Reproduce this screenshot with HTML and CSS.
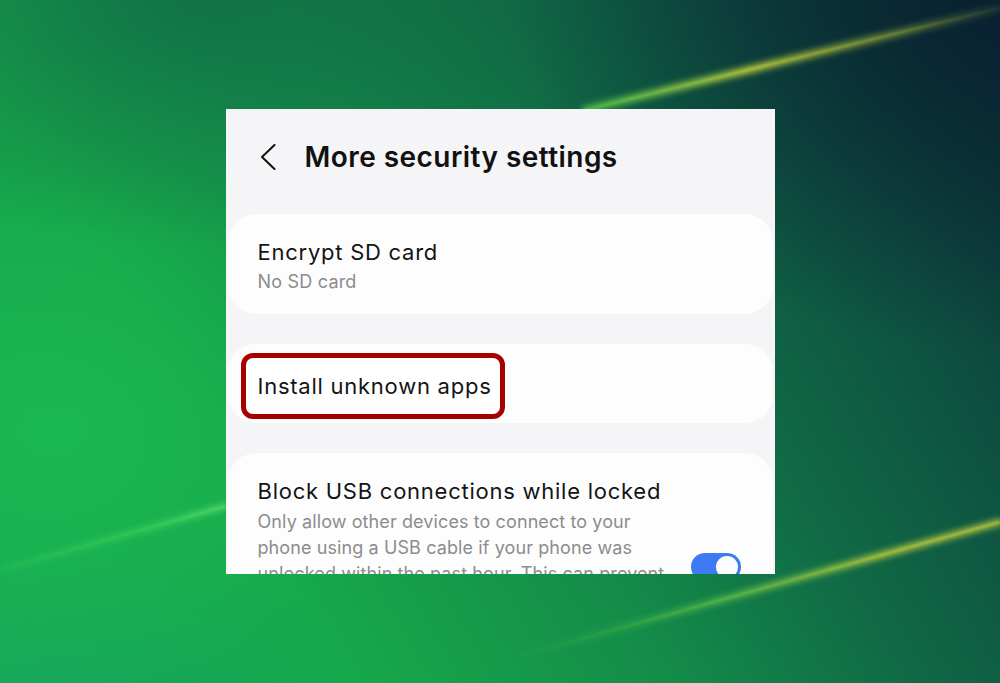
FILE: index.html
```html
<!DOCTYPE html>
<html lang="en">
<head>
<meta charset="utf-8">
<title>More security settings</title>
<link rel="stylesheet" href="styles.css">
</head>
<body>
<div class="stage">
  <svg class="streaks" width="1000" height="683" viewBox="0 0 1000 683" aria-hidden="true">
    <defs>
      <filter id="glow" x="-20%" y="-200%" width="140%" height="500%">
        <feGaussianBlur stdDeviation="3"/>
      </filter>
      <filter id="soft" x="-20%" y="-200%" width="140%" height="500%">
        <feGaussianBlur stdDeviation="0.8"/>
      </filter>
      <linearGradient id="s1" gradientUnits="userSpaceOnUse" x1="585" y1="110" x2="1000" y2="8">
        <stop offset="0" stop-color="#4fc24a" stop-opacity="0.9"/>
        <stop offset="0.4" stop-color="#b9c93c" stop-opacity="1"/>
        <stop offset="0.75" stop-color="#9db23a" stop-opacity="0.6"/>
        <stop offset="1" stop-color="#7d8f3a" stop-opacity="0.15"/>
      </linearGradient>
      <linearGradient id="s2" gradientUnits="userSpaceOnUse" x1="0" y1="570" x2="226" y2="506">
        <stop offset="0" stop-color="#3fd35c" stop-opacity="0.2"/>
        <stop offset="0.6" stop-color="#42d65c" stop-opacity="0.7"/>
        <stop offset="1" stop-color="#5fe070" stop-opacity="0.9"/>
      </linearGradient>
      <linearGradient id="s3" gradientUnits="userSpaceOnUse" x1="520" y1="656" x2="1000" y2="522">
        <stop offset="0" stop-color="#2fa848" stop-opacity="0.1"/>
        <stop offset="0.4" stop-color="#5cc04a" stop-opacity="0.8"/>
        <stop offset="0.75" stop-color="#b4c93c" stop-opacity="1"/>
        <stop offset="1" stop-color="#c0cf40" stop-opacity="0.9"/>
      </linearGradient>
    </defs>
    <g filter="url(#glow)">
      <line x1="585" y1="110" x2="1000" y2="8" stroke="url(#s1)" stroke-width="7" stroke-linecap="round"/>
      <line x1="0" y1="570" x2="226" y2="506" stroke="url(#s2)" stroke-width="5" stroke-linecap="round"/>
      <line x1="520" y1="656" x2="1000" y2="522" stroke="url(#s3)" stroke-width="6" stroke-linecap="round"/>
    </g>
    <g filter="url(#soft)">
      <line x1="585" y1="110" x2="1000" y2="8" stroke="url(#s1)" stroke-width="1.6"/>
      <line x1="0" y1="570" x2="226" y2="506" stroke="url(#s2)" stroke-width="1.2"/>
      <line x1="520" y1="656" x2="1000" y2="522" stroke="url(#s3)" stroke-width="1.6"/>
    </g>
  </svg>

  <main class="phone">
    <header class="appbar">
      <svg class="back" width="16" height="26" viewBox="0 0 16 26" aria-hidden="true">
        <path d="M14.5 1 L2 13 L14.5 25" fill="none" stroke="#111" stroke-width="2" stroke-linecap="round" stroke-linejoin="round"/>
      </svg>
      <h1 class="title">More security settings</h1>
    </header>

    <section class="card card-sd">
      <div class="item-title">Encrypt SD card</div>
      <div class="item-sub">No SD card</div>
    </section>

    <section class="card card-unknown">
      <span class="highlight">Install unknown apps</span>
    </section>

    <section class="card card-usb">
      <div class="usb-text">
        <div class="item-title">Block USB connections while locked</div>
        <p class="item-desc">Only allow other devices to connect to your phone using a USB cable if your phone was unlocked within the past hour. This can prevent unauthorized access to your phone's data.</p>
      </div>
      <div class="toggle" role="switch" aria-checked="true"></div>
    </section>
  </main>
</div>
</body>
</html>
```

FILE: styles.css
```css
* { box-sizing: border-box; }

html, body {
  margin: 0;
  padding: 0;
}

body {
  font-family: "Inter", "Roboto", "Liberation Sans", sans-serif;
  color: #111;
}

.stage {
  position: relative;
  width: 1000px;
  height: 683px;
  overflow: hidden;
  display: flex;
  align-items: center;
  justify-content: center;
  background:
    radial-gradient(ellipse 700px 500px at 1000px 0px, rgba(8, 30, 48, 0.85), rgba(8, 30, 48, 0) 70%),
    radial-gradient(ellipse 640px 330px at 200px 0px, rgba(16, 100, 68, 0.7), rgba(16, 100, 68, 0) 75%),
    radial-gradient(ellipse 500px 380px at 60px 430px, rgba(28, 196, 80, 0.55), rgba(28, 196, 80, 0) 70%),
    radial-gradient(ellipse 420px 200px at 80px 700px, rgba(22, 160, 100, 0.45), rgba(22, 160, 100, 0) 75%),
    linear-gradient(60deg, #17ac55 0%, #17a84b 25%, #148c49 48%, #106a46 65%, #0e4f40 82%, #0b2e34 100%);
}

.streaks {
  position: absolute;
  left: 0;
  top: 0;
  pointer-events: none;
}

.phone {
  position: relative;
  z-index: 1;
  width: 549px;
  height: 465px;
  overflow: hidden;
  background: #f5f5f7;
}

.appbar {
  display: flex;
  align-items: center;
  height: 36px;
  margin: 30px 0 39px;
  padding-left: 34px;
}

.back {
  flex: none;
  margin-right: 29px;
}

.title {
  margin: 0;
  font-size: 28px;
  font-weight: 600;
  letter-spacing: 0.45px;
  line-height: 36px;
  color: #111;
}

.card {
  margin: 0 2px;
  background: #fdfdfe;
  border-radius: 28px;
}

.card + .card {
  margin-top: 30px;
}

.card-sd {
  padding: 23px 30px 17px;
}

.item-title {
  font-size: 22px;
  line-height: 30px;
  letter-spacing: 0.75px;
  color: #141414;
}

.item-sub {
  font-size: 18px;
  line-height: 30px;
  letter-spacing: 0.2px;
  color: #8c8c8e;
}

.card-unknown {
  padding: 9px 0 4px 13px;
}

.highlight {
  display: inline-block;
  border: 5px solid #a80000;
  border-radius: 12px;
  padding: 0 8px 0 12px;
  font-size: 22px;
  line-height: 56px;
  letter-spacing: 0.75px;
  color: #141414;
  background: #fff;
}

.card-usb {
  display: flex;
  align-items: flex-start;
  gap: 20px;
  padding: 23px 32px 30px 30px;
}

.usb-text {
  flex: 1;
  min-width: 0;
}

.item-desc {
  margin: 3px 0 0;
  font-size: 18px;
  line-height: 26px;
  letter-spacing: 0.1px;
  color: #8c8c8e;
}

.toggle {
  position: relative;
  flex: none;
  width: 50px;
  height: 28px;
  margin-top: 77px;
  border-radius: 14px;
  background: #3e7bf3;
}

.toggle::after {
  content: "";
  position: absolute;
  right: 3px;
  top: 3px;
  width: 22px;
  height: 22px;
  border-radius: 50%;
  background: #fff;
}
```
